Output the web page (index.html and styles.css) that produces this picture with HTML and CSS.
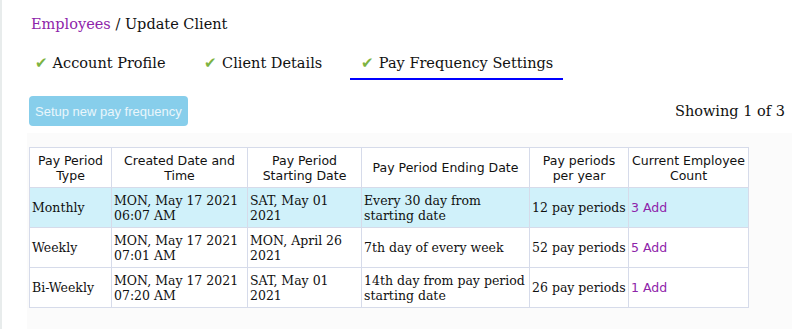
FILE: index.html
```html
<!DOCTYPE html>
<html>
<head>
    <title>Update Client</title>
    <link rel="stylesheet" href="styles.css">
</head>
<body>
    <div class="page">
        <div class="crumbs"><a href="#">Employees</a> / Update Client</div>
        <ul class="tabs">
            <li><span class="tick">✔</span> Account Profile</li>
            <li><span class="tick">✔</span> Client Details</li>
            <li class="active"><span class="tick">✔</span> Pay Frequency Settings</li>
        </ul>
        <div class="toolbar">
            <button class="btn-new" disabled>Setup new pay frequency</button>
            <span class="count">Showing 1 of 3</span>
        </div>
        <div class="panel">
            <table class="freq">
                <thead>
                    <tr>
                        <th class="c1">Pay Period Type</th>
                        <th class="c2">Created Date and Time</th>
                        <th class="c3">Pay Period Starting Date</th>
                        <th class="c4">Pay Period Ending Date</th>
                        <th class="c5">Pay periods per year</th>
                        <th class="c6">Current Employee Count</th>
                    </tr>
                </thead>
                <tbody>
                    <tr class="current">
                        <td>Monthly</td>
                        <td>MON, May 17 2021 06:07 AM</td>
                        <td>SAT, May 01 2021</td>
                        <td>Every 30 day from starting date</td>
                        <td>12 pay periods</td>
                        <td><a href="#">3 Add</a></td>
                    </tr>
                    <tr>
                        <td>Weekly</td>
                        <td>MON, May 17 2021 07:01 AM</td>
                        <td>MON, April 26 2021</td>
                        <td>7th day of every week</td>
                        <td>52 pay periods</td>
                        <td><a href="#">5 Add</a></td>
                    </tr>
                    <tr>
                        <td>Bi-Weekly</td>
                        <td>MON, May 17 2021 07:20 AM</td>
                        <td>SAT, May 01 2021</td>
                        <td>14th day from pay period starting date</td>
                        <td>26 pay periods</td>
                        <td><a href="#">1 Add</a></td>
                    </tr>
                </tbody>
            </table>
        </div>
    </div>
</body>
</html>
```

FILE: styles.css
```css
body {
    font-family: 'DejaVu Serif', serif;
    margin: 0;
    padding: 0;
    background-color: #ffffff;
    color: #111;
    border-left: 2px solid #e8ecec;
    min-height: 329px;
    box-sizing: border-box;
}

.page {
    padding: 14px 0 0 25px;
}

.crumbs {
    font-size: 14.5px;
    line-height: 20px;
    padding-left: 4px;
}

.crumbs a {
    color: #8e24aa;
    text-decoration: none;
}

.tabs {
    list-style-type: none;
    margin: 20px 0 0 -3px;
    padding: 0;
    display: flex;
    font-size: 14.5px;
}

.tabs li {
    padding: 0 10px 6px 11px;
    margin-right: 18px;
    border-bottom: 2px solid transparent;
}

.tabs li.active {
    border-bottom-color: #0000ff;
}

.tick {
    color: #7cb342;
    font-size: 15px;
}

.toolbar {
    display: flex;
    justify-content: space-between;
    align-items: center;
    margin-top: 16px;
    padding-right: 7px;
}

.btn-new {
    font-family: 'Liberation Sans', sans-serif;
    font-size: 13px;
    background-color: #87ceeb;
    color: #eaf6fb;
    border: none;
    border-radius: 4px;
    padding: 0 6px;
    height: 30px;
    white-space: nowrap;
    margin-left: 2px;
}

.count {
    font-size: 14.5px;
}

.panel {
    background-color: #fbfbfb;
    margin-top: 7px;
    padding: 14px 0 30px 2px;
}

.freq {
    border-collapse: collapse;
    font-size: 12.5px;
    background-color: #ffffff;
}

.freq th,
.freq td {
    border: 1px solid #d6dbea;
    height: 39px;
    padding: 0 2px;
    line-height: 15px;
}

.freq th {
    font-family: 'DejaVu Sans', sans-serif;
    font-weight: normal;
    text-align: center;
}

.freq td {
    text-align: left;
}

.freq .c1 { width: 77px; }
.freq .c2 { width: 131px; }
.freq .c3 { width: 109px; }
.freq .c4 { width: 163px; }
.freq .c5 { width: 94px; }
.freq .c6 { width: 115px; }

.freq tr.current td {
    background-color: #d0f1fa;
}

.freq td a {
    font-family: 'DejaVu Sans', sans-serif;
    color: #8e24aa;
    text-decoration: none;
}
```
